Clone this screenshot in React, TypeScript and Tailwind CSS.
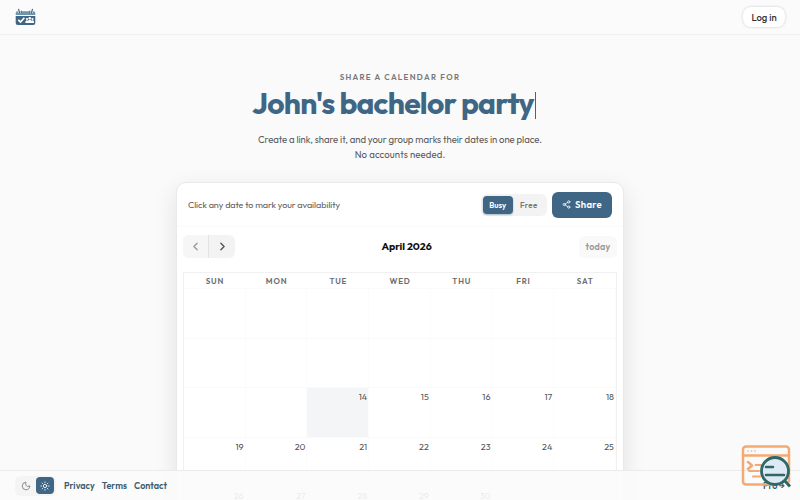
import { useState } from "react"
import { ChevronLeft, ChevronRight, Moon, Share2, Sun } from "lucide-react"

const weekdays = ["SUN", "MON", "TUE", "WED", "THU", "FRI", "SAT"]

// days before the 14th are in the past and stay blank
const weeks = [
  ["", "", "", "", "", "", ""],
  ["", "", "", "", "", "", ""],
  ["", "", "14", "15", "16", "17", "18"],
  ["19", "20", "21", "22", "23", "24", "25"],
  ["26", "27", "28", "29", "30", "", ""],
]

function Logo() {
  return (
    <svg width="21" height="18" viewBox="0 0 21 18">
      <path d="M2.500 3.300h16A1.800 1.800 0 0 1 20.300 5v2H.7V5A1.800 1.800 0 0 1 2.500 3.300Z" fill="#6f94ab" />
      <path d="M.7 8h19.600v6.900a2 2 0 0 1-2 2H2.700a2 2 0 0 1-2-2Z" fill="#3f6785" />
      <path d="M4.800 1v4M16.200 1v4" stroke="#fcfcfc" strokeWidth="3.200" />
      <path d="m3.600 1.400.9 3.200M17.400 1.400l-.9 3.200M6.200 3.200v1.200M14.800 3.200v1.200" stroke="#3f6785" strokeWidth="1.200" strokeLinecap="round" />
      <path d="m3.300 11.800 2.200 2.300 3.900-4.400" stroke="#fff" strokeWidth="1.700" fill="none" />
      <g fill="#fff">
        <circle cx="12" cy="11.100" r="1.100" />
        <circle cx="14.800" cy="10.300" r="1.300" />
        <circle cx="17.500" cy="11.100" r="1.100" />
        <path d="M10.400 15v-1.500q1.600-2 2.400-.6 2-2.400 4 0 .8-1.400 2.200.6V15Z" />
      </g>
    </svg>
  )
}

function InspectBadge() {
  return (
    <svg className="pointer-events-none absolute left-[740px] top-[442px] z-30" width="54" height="48" viewBox="0 0 54 48" fill="none">
      <g stroke="#f3aa72" strokeWidth="2.500" strokeLinecap="round" strokeLinejoin="round">
        <path d="M34 42.500H6a3 3 0 0 1-3-3V7.500a3 3 0 0 1 3-3h40a3 3 0 0 1 3 3v32" />
        <path d="M3 13.500h46M8 20l4 3.500-4 3.500" />
        <path d="M15.500 23h7M9 29h10M13 34.500h7" strokeWidth="2" />
        <path d="M8 9h.1M11.500 9h.1M15 9h.1" strokeWidth="1.600" />
      </g>
      <circle cx="35" cy="29" r="13.500" fill="#dce9f2" fillOpacity=".95" stroke="#2f6668" strokeWidth="2.800" />
      <path d="M26 25h7M26 33h18" stroke="#2f6668" strokeWidth="2.500" strokeLinecap="round" />
      <path d="m45 39 5 5.500" stroke="#2f6668" strokeWidth="3" />
    </svg>
  )
}

export default function App() {
  const [mode, setMode] = useState("Busy")

  return (
    <div className="relative h-[500px] w-[800px] overflow-hidden bg-[#fafafa] font-[Outfit,Lato,sans-serif] text-[#4c4c4c]">
      <header className="flex h-[35px] items-center justify-between border-b border-[#f0f0f0] bg-[#fbfbfb] px-[15px]">
        <Logo />
        <button className="h-5 w-[42px] whitespace-nowrap rounded-[8px] bg-white text-[9.500px] font-medium text-[#333] shadow-[0_0_3px_#ccc]">
          Log in
        </button>
      </header>

      <main className="flex flex-col items-center">
        <p className="mt-[35.500px] h-3 text-[8px] font-semibold leading-3 tracking-[1.300px] text-[#777]">SHARE A CALENDAR FOR</p>
        <h1 className="mt-[3px] flex h-[34.500px] items-center whitespace-nowrap pr-[12px] text-3xl font-bold leading-[34px] tracking-[-0.750px] text-[#3f6785]">
          John's bachelor party
          <span className="ml-px mt-[5px] h-[27px] w-px bg-[#3f6785]" />
        </h1>
        <div className="mt-[12px] text-center text-[9.600px] leading-[15px] text-[#5c5c5c]">
          <p className="tracking-[-0.080px]">Create a link, share it, and your group marks their dates in one place.</p>
          <p className="tracking-[0.100px]">No accounts needed.</p>
        </div>

        <section className="mt-[20px] h-[350px] w-[448px] rounded-[10px] border border-[#e9e9e9] bg-white shadow-[0_8px_24px_rgba(0,0,0,0.10)]">
          <div className="flex h-[44px] items-center border-b border-[#fafafa] px-[11px]">
            <p className="text-[9px] tracking-[-0.050px] text-[#5c5c5c]">Click any date to mark your availability</p>
            <div className="ml-auto mr-[5px] flex h-[22px] w-[66px] items-center rounded-[6px] bg-[#f3f3f3] px-[2px] text-[8px] font-semibold">
              {["Busy", "Free"].map((m) => (
                <button
                  key={m}
                  onClick={() => setMode(m)}
                  className={
                    mode === m
                      ? "h-[18px] w-[30px] rounded-[4px] bg-[#3f6785] text-white shadow-[0_1px_2px_rgba(63,103,133,0.4)]"
                      : "h-[18px] w-[33px] tracking-[0.300px] text-[#777]"
                  }
                >
                  {m}
                </button>
              ))}
            </div>
            <button className="flex h-[26px] w-[60px] items-center justify-center gap-[4px] rounded-[6px] bg-[#3f6785] text-[9.500px] font-semibold tracking-[0.300px] text-white">
              <Share2 size={9} />
              Share
            </button>
          </div>

          <div className="flex h-[39px] items-center justify-between px-[6px]">
            <div className="flex h-[23px] w-[52px] overflow-hidden rounded-[6px] bg-[#f3f3f3]">
              <button className="flex w-[26px] items-center justify-center border-r border-[#e3e3e3] bg-[#f6f6f6] text-[#999]">
                <ChevronLeft size={13} strokeWidth={2.500} />
              </button>
              <button className="flex w-[26px] items-center justify-center text-[#555]">
                <ChevronRight size={13} strokeWidth={2.500} />
              </button>
            </div>
            <h2 className="pr-px text-[10.500px] font-bold tracking-[-0.050px] text-[#111]">April 2026</h2>
            <button className="h-[22px] w-[38px] rounded-[6px] bg-[#f9f9f9] text-[9px] font-semibold tracking-[0.200px] text-[#999]">today</button>
          </div>

          <div className="mx-[6px] mt-[6px] border border-[#f1f1f1]">
            <div className="grid h-[16px] grid-cols-7 border-b border-[#fafafa] text-center text-[8px] font-semibold leading-[16px] tracking-[0.800px] text-[#6c6c6c]">
              {weekdays.map((day) => (
                <span key={day}>{day}</span>
              ))}
            </div>
            {weeks.map((week, i) => (
              <div key={i} className="grid h-[49.500px] grid-cols-7 border-b border-[#fafafa]">
                {week.map((day, j) => (
                  <div
                    key={j}
                    className={`border-r border-[#fcfcfc] pr-px pt-[2px] text-right text-[9px] leading-[14px] text-[#555] ${day === "14" ? "bg-[#f3f5f6]" : ""}`}
                  >
                    {day}
                  </div>
                ))}
              </div>
            ))}
          </div>
        </section>
      </main>

      <footer className="absolute bottom-0 left-0 z-20 flex h-[30px] w-full items-center border-t border-[#ebebeb] bg-[#fbfbfb]/90 px-[15px] text-[9px] font-semibold text-[#3d5e6d]">
        <div className="flex h-5 w-[41px] items-center rounded-[5px] bg-[#f4f4f4]">
          <button className="flex h-4 w-[21px] items-center justify-center text-[#777]">
            <Moon size={10} />
          </button>
          <button className="flex h-[17px] w-[18px] items-center justify-center rounded-[4px] bg-[#3f6785] text-white">
            <Sun size={10} />
          </button>
        </div>
        <nav className="ml-[8px] flex gap-[7px] tracking-[0.040px]">
          <a href="#privacy">Privacy</a>
          <a href="#terms">Terms</a>
          <a href="#contact">Contact</a>
        </nav>
        <a href="#pro" className="ml-auto">Pro →</a>
      </footer>
      <InspectBadge />
    </div>
  )
}
